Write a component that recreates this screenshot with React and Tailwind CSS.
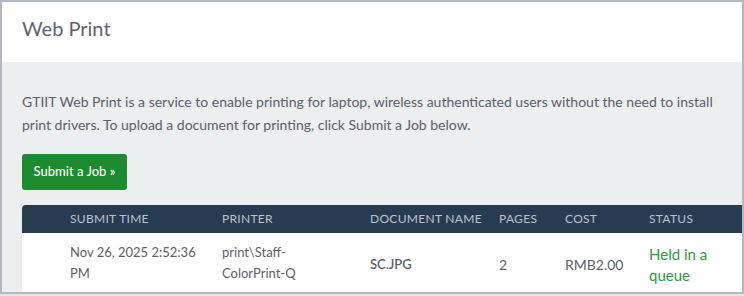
import React from 'react'

const jobs = [
    {
        time: 'Nov 26, 2025 2:52:36 PM',
        printer: 'print\\Staff-ColorPrint-Q',
        doc: 'SC.JPG',
        pages: 2,
        cost: 'RMB2.00',
        status: 'Held in a queue',
    },
]

function App() {
    return (
        <div className="w-[744px] h-[296px] bg-[#e6e7ea] font-['Lato','Liberation_Sans',sans-serif]">
            <div className="h-[294px] border-2 border-[#b4b9bf] overflow-hidden bg-[#eceef0]">
                {/* Title bar */}
                <header className="h-[60px] bg-white px-5 flex items-center">
                    <h1 className="text-[20px] text-[#5d6370] leading-none pb-[9px]">Web Print</h1>
                </header>

                {/* Content */}
                <main className="px-5 pt-[28px]">
                    <p className="w-[720px] text-[14px] leading-[23px] text-[#5b606b]">
                        GTIIT Web Print is a service to enable printing for laptop, wireless authenticated users without the need to install print drivers. To upload a document for printing, click Submit a Job below.
                    </p>

                    <button className="mt-[18px] h-[36px] w-[105px] rounded-[3px] bg-[#1e8a2f] text-white text-[13px] font-medium">
                        Submit a Job »
                    </button>

                    <table className="mt-[15px] w-[760px] table-fixed border-collapse">
                        <colgroup>
                            <col className="w-[36px]" />
                            <col className="w-[152px]" />
                            <col className="w-[148px]" />
                            <col className="w-[129px]" />
                            <col className="w-[66px]" />
                            <col className="w-[84px]" />
                            <col />
                        </colgroup>
                        <thead>
                            <tr className="h-[28px] bg-[#283c51] text-left text-[12px] uppercase tracking-[0.3px] text-[#bcc3cc] whitespace-nowrap">
                                <th className="rounded-tl-[4px]" />
                                <th className="px-3 font-normal">Submit Time</th>
                                <th className="px-3 font-normal">Printer</th>
                                <th className="px-3 font-normal">Document Name</th>
                                <th className="px-3 font-normal">Pages</th>
                                <th className="px-3 font-normal">Cost</th>
                                <th className="px-3 font-normal">Status</th>
                            </tr>
                        </thead>
                        <tbody>
                            {jobs.map((job, i) => (
                                <tr key={i} className="bg-white text-[13px] leading-[21px] text-[#5b606b] align-middle">
                                    <td />
                                    <td className="px-3 pt-[9px] pb-[12px]">{job.time}</td>
                                    <td className="px-3 pt-[9px] pb-[12px]">{job.printer}</td>
                                    <td className="px-3 font-semibold">{job.doc}</td>
                                    <td className="px-3 text-[14px]">{job.pages}</td>
                                    <td className="px-3 text-[14px]">{job.cost}</td>
                                    <td className="px-3 text-[15px] leading-[21px] text-[#2b9a3b]">
                                        <div className="w-[66px]">{job.status}</div>
                                    </td>
                                </tr>
                            ))}
                        </tbody>
                    </table>
                </main>
            </div>
        </div>
    )
}

export default App
